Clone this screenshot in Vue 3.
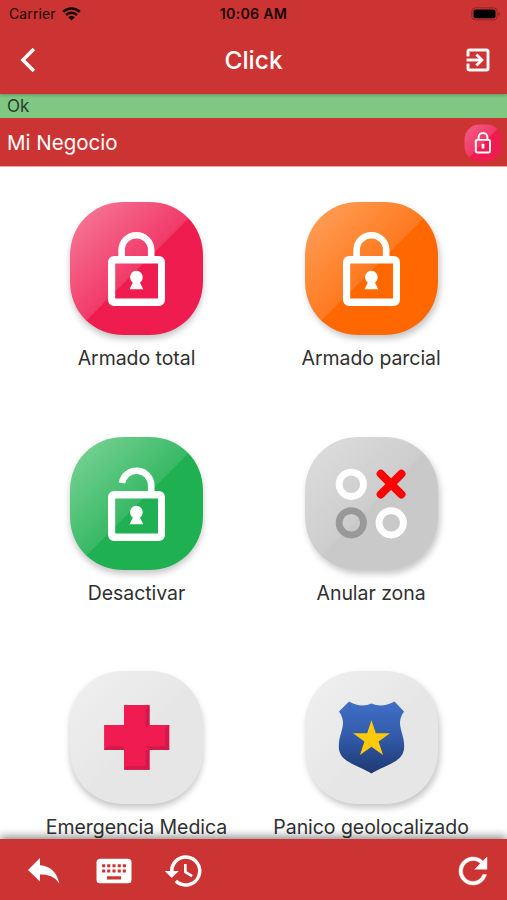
<template>
  <div class="screen">
    <header>
      <div class="status">
        <div class="carrier">
          <span>Carrier</span>
          <svg width="19" height="14" viewBox="0 0 19 14">
            <path d="M1.2 4.8A12 12 0 0 1 17.8 4.8M4 8A8 8 0 0 1 15 8" fill="none" stroke="#160505" stroke-width="2.5" />
            <path d="M9.5 13.6L6.2 10.2A4.8 4.8 0 0 1 12.8 10.2Z" fill="#160505" />
          </svg>
        </div>
        <b>10:06 AM</b>
        <svg class="battery" width="30" height="14" viewBox="0 0 30 14">
          <rect x=".8" y=".8" width="25.4" height="12" rx="3.5" fill="none" stroke="#8f2525" />
          <rect x="2.5" y="2.5" width="22" height="8.8" rx="2" fill="#000" />
          <path d="M27.5 5v4q1.5-.7 1.5-2t-1.5-2" fill="#8f2525" />
        </svg>
      </div>
      <div class="navbar">
        <svg width="28" height="28" viewBox="0 0 28 28">
          <path d="M19.9 3L8.9 14L19.9 25" fill="none" stroke="#fff" stroke-width="3.5" />
        </svg>
        <h1>Click</h1>
        <svg width="30" height="30" viewBox="0 0 24 24">
          <path fill="#fff" stroke="#fff" stroke-width=".3" d="M10.09 15.59L11.5 17l5-5-5-5-1.41 1.41L12.67 11H3v2h9.67l-2.58 2.59zM19 3H5a2 2 0 0 0-2 2v4h2V5h14v14H5v-4H3v4a2 2 0 0 0 2 2h14a2 2 0 0 0 2-2V5a2 2 0 0 0-2-2z" />
        </svg>
      </div>
    </header>

    <div class="state">Ok</div>
    <div class="place">
      <span>Mi Negocio</span>
      <svg width="38" height="38" viewBox="0 0 38 38">
        <defs>
          <linearGradient id="mini" x1="0" y1="0" x2="1" y2="1">
            <stop offset="0" stop-color="#f55f86" />
            <stop offset=".5" stop-color="#ef3867" />
            <stop offset=".5" stop-color="#ef1c50" />
          </linearGradient>
        </defs>
        <rect x=".5" y=".5" width="37" height="37" rx="15" fill="url(#mini)" />
        <rect x="11.8" y="15.9" width="14.2" height="12.6" rx="1.2" fill="none" stroke="#fff" stroke-width="1.9" />
        <path d="M14.6 16v-2.6a4.4 4.4 0 0 1 8.8 0V16" fill="none" stroke="#fff" stroke-width="1.9" />
        <rect x="17.6" y="19.8" width="2.8" height="4.8" fill="#fff" />
      </svg>
    </div>

    <main>
      <div v-for="item in actions" :key="item.id" class="action">
        <svg class="tile" :class="item.shadow" width="133" height="133" viewBox="0 0 133 133">
          <defs>
            <linearGradient :id="item.id" x1="0" y1="0" x2="1" y2="1">
              <stop offset="0" :stop-color="item.colors[0]" />
              <stop offset=".505" :stop-color="item.colors[1]" />
              <stop offset=".509" :stop-color="item.colors[2]" />
            </linearGradient>
          </defs>
          <path :d="tilePath" :fill="`url(#${item.id})`" />

          <g v-if="item.icon === 'lock' || item.icon === 'unlock'">
            <path fill="#fff" fill-rule="evenodd" d="M44 54H89a6 6 0 0 1 6 6V98a6 6 0 0 1-6 6H44a6 6 0 0 1-6-6V60a6 6 0 0 1 6-6ZM45.2 61.5V96.5H88V61.5Z" />
            <path v-if="item.icon === 'lock'" d="M51.6 56V48a14.8 14.8 0 0 1 29.6 0v8" class="shackle" />
            <path v-else d="M52 46a14.7 14.7 0 0 1 29.2 2v8" class="shackle" />
            <path fill="#fff" d="M62.8 80.5A6.4 6.4 0 1 1 70 80.5L73.2 87.3H59.6Z" />
          </g>

          <g v-else-if="item.icon === 'zones'" fill="none" stroke-width="6.8">
            <circle cx="46.3" cy="47.3" r="12.2" stroke="#fff" />
            <circle cx="46.3" cy="85.8" r="12.2" stroke="#999" />
            <circle cx="86.2" cy="85.8" r="12.2" stroke="#fff" />
            <path d="M75.8 36.8L96.4 57.4M96.4 36.8L75.8 57.4" stroke="#fe0000" stroke-width="8.2" stroke-linecap="round" />
          </g>

          <g v-else-if="item.icon === 'cross'">
            <path fill="#f01b50" d="M54 34H79.5V54H99.2V79H79.5V98.8H54V79H34.1V54H54Z" />
            <path fill="#d3184a" d="M79.5 34V54L75.5 57V38ZM99.2 54V79H79.5L75.5 75.2H95V58ZM34.1 79L38 75.2H54V79ZM54 98.8L58 95H75.5V79H79.5V98.8Z" />
          </g>

          <g v-else>
            <linearGradient id="shield" x1="0" y1="0" x2="0" y2="1">
              <stop offset="0" stop-color="#3f70c7" />
              <stop offset=".5" stop-color="#325aa8" />
              <stop offset="1" stop-color="#1d3970" />
            </linearGradient>
            <path fill="url(#shield)" d="M44 30.5Q56 37.2 66.5 32.5Q77 37.2 89.5 30.5L99 40.5C90 53 99 61 99.2 75C99.6 91 83 92.5 66.5 102.5C50 92.5 33.4 91 33.8 75C34 61 43 53 34 40.5Z" />
            <path fill="#ffc90c" d="M66.5 49L70.8 62.2H85L73.6 70.6L78 84L66.5 75.8L55 84L59.4 70.6L48 62.2H62.2Z" />
          </g>
        </svg>
        <span class="label">{{ item.label }}</span>
      </div>
    </main>

    <footer>
      <svg width="40" height="40" viewBox="0 0 40 40">
        <path fill="#fff" d="M16 14.3V7L4 19l12 11.5v-7c8 0 14.6 1.6 19.4 9.3C33 21.5 27 15.3 16 14.3z" />
      </svg>
      <svg width="42" height="42" viewBox="0 0 24 24">
        <path fill="#fff" fill-rule="evenodd" d="M4 5h16a2 2 0 0 1 2 2v10a2 2 0 0 1-2 2H4a2 2 0 0 1-2-2V7c0-1.1.9-2 2-2ZM5.2 8.1v1.8H7V8.1ZM8.1 8.1v1.8h1.8V8.1ZM11.1 8.1v1.8h1.8V8.1ZM14.1 8.1v1.8h1.8V8.1ZM17 8.1v1.8h1.8V8.1ZM5.2 11.1v1.8H7v-1.8ZM8.1 11.1v1.8h1.8v-1.8ZM11.1 11.1v1.8h1.8v-1.8ZM14.1 11.1v1.8h1.8v-1.8ZM17 11.1v1.8h1.8v-1.8ZM8 15v1.8h8V15Z" />
      </svg>
      <svg width="42" height="42" viewBox="0 0 24 24">
        <path fill="#fff" d="M13 3a9 9 0 0 0-9 9H1l3.9 3.9.1.1L9 12H6a7 7 0 1 1 2.05 4.95l-1.42 1.42A9 9 0 1 0 13 3zm-1 5v5l4.3 2.5.7-1.2-3.5-2.1V8H12z" />
      </svg>
      <svg class="refresh" width="42" height="42" viewBox="0 0 24 24">
        <path fill="#fff" stroke="#fff" stroke-width=".25" d="M17.65 6.35A8 8 0 1 0 19.73 14h-2.08A6 6 0 1 1 12 6c1.66 0 3.14.69 4.22 1.78L13 11h7V4l-2.35 2.35z" />
      </svg>
    </footer>
  </div>
</template>

<script setup>
const tilePath = 'M54 0H79C110 0 133 23 133 54V79C133 110 110 133 79 133H54C23 133 0 110 0 79V54C0 23 23 0 54 0Z'

const actions = [
  { id: 'total', label: 'Armado total', icon: 'lock', colors: ['#f67f9d', '#f13a68', '#ef1c50'], shadow: 'down' },
  { id: 'parcial', label: 'Armado parcial', icon: 'lock', colors: ['#ffa35f', '#ff7a20', '#ff6801'], shadow: 'side' },
  { id: 'desactivar', label: 'Desactivar', icon: 'unlock', colors: ['#80d59b', '#38b965', '#1fb052'], shadow: 'down' },
  { id: 'anular', label: 'Anular zona', icon: 'zones', colors: ['#dedede', '#cdcdcd', '#c9c9c9'], shadow: 'side' },
  { id: 'medica', label: 'Emergencia Medica', icon: 'cross', colors: ['#f0f0f0', '#e7e7e7', '#e6e6e6'], shadow: 'down' },
  { id: 'panico', label: 'Panico geolocalizado', icon: 'shield', colors: ['#f0f0f0', '#e7e7e7', '#e6e6e6'], shadow: 'side' },
]
</script>

<style>
body {
  margin: 0;
  background: #fff;
}
</style>

<style scoped>
.screen {
  width: 507px;
  height: 900px;
  display: flex;
  flex-direction: column;
  overflow: hidden;
  background: #fff;
  font-family: Inter, "Liberation Sans", sans-serif;
}
svg {
  display: block;
  flex: none;
}
header {
  height: 94px;
  flex: none;
  background: #cc3333;
  box-shadow: 0 1px 3px rgba(0, 0, 0, 0.3);
  z-index: 1;
}
.status {
  height: 27px;
  display: grid;
  grid-template-columns: 1fr auto 1fr;
  align-items: center;
  padding: 0 6px 0 9px;
  font-size: 14px;
  color: #160505;
}
.status b {
  font-weight: 600;
  font-size: 14.2px;
  letter-spacing: 0.25px;
  margin-left: -3px;
}
.carrier {
  display: flex;
  align-items: center;
  gap: 6px;
}
.carrier span {
  letter-spacing: 0.1px;
}
.battery {
  justify-self: end;
}
.navbar {
  height: 65px;
  display: grid;
  grid-template-columns: 1fr auto 1fr;
  align-items: center;
  padding: 0 14px;
}
.navbar svg:last-child {
  justify-self: end;
}
h1 {
  margin: 0;
  font-size: 24.5px;
  font-weight: 500;
  color: #fff;
}
.state {
  height: 24px;
  line-height: 24px;
  flex: none;
  padding-left: 7px;
  background: #81c784;
  font-size: 17px;
  color: #25402a;
}
.place {
  height: 49px;
  flex: none;
  display: flex;
  align-items: center;
  justify-content: space-between;
  padding: 1px 5px 0 7px;
  background: #cc3333;
  border-bottom: 1px solid #e9a5a5;
  box-sizing: border-box;
  font-size: 20.5px;
  color: #fff;
}
main {
  flex: 1;
  min-height: 0;
  display: grid;
  grid-template-columns: 234.6px 234.6px;
  grid-auto-rows: 234.6px;
  padding: 35px 0 0 19.2px;
}
.action {
  display: flex;
  flex-direction: column;
  align-items: center;
}
.tile {
  overflow: visible;
}
.down {
  filter: drop-shadow(0 4px 3px rgba(0, 0, 0, 0.22));
}
.side {
  filter: drop-shadow(2px 4px 3px rgba(0, 0, 0, 0.22));
}
.shackle {
  fill: none;
  stroke: #fff;
  stroke-width: 6.6;
}
.label {
  margin-top: 10px;
  line-height: 26px;
  font-size: 19.5px;
  letter-spacing: -0.05px;
  white-space: nowrap;
  color: #303030;
}
footer {
  height: 61px;
  flex: none;
  display: flex;
  align-items: center;
  gap: 28.5px;
  padding: 3px 13px 0 24px;
  box-sizing: border-box;
  background: #cc3333;
  box-shadow: 0 -2px 9px rgba(0, 0, 0, 0.5);
  z-index: 1;
}
.refresh {
  margin-left: auto;
}
</style>
